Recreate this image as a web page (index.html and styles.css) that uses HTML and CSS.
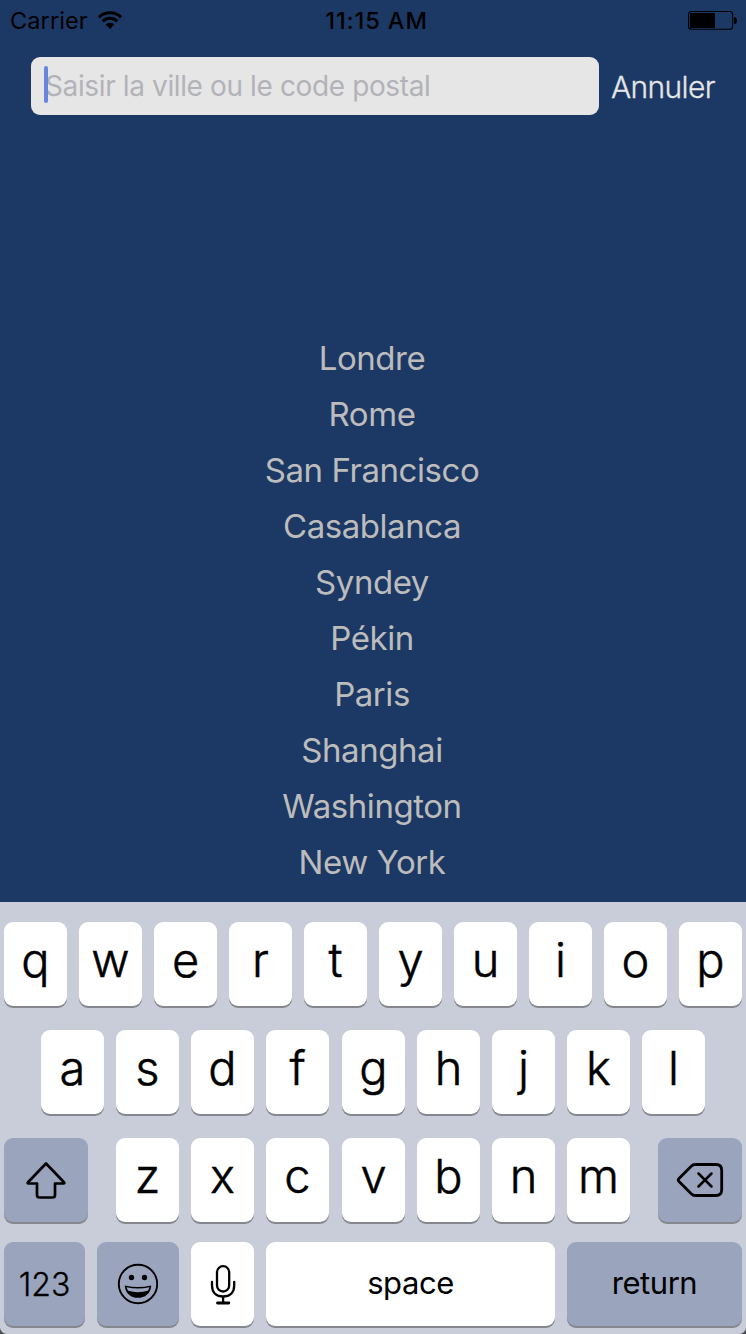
FILE: index.html
```html
<!DOCTYPE html>
<html lang="fr">
<head>
<meta charset="utf-8">
<title>Recherche de ville</title>
<link rel="stylesheet" href="styles.css">
</head>
<body>
<div class="screen">
  <header class="status">
    <div class="status-left">
      <span class="carrier">Carrier</span>
      <svg class="wifi" width="26" height="20" viewBox="0 0 26 20"><g fill="none" stroke="#000" stroke-width="3"><path d="M1.900 7.400a15.700 15.700 0 0 1 22.200 0"/><path d="M5.600 11.400a10.500 10.500 0 0 1 14.800 0"/></g><path d="M8.600 14.600a6.200 6.200 0 0 1 8.800 0L13 19z"/></svg>
    </div>
    <span class="time">11:15 AM</span>
    <svg class="battery" width="50" height="20" viewBox="0 0 50 20"><rect x="1.600" y="1.500" width="44" height="17.800" rx="2.800" fill="none" stroke="#000" stroke-width="1.100"/><rect x="3" y="3" width="25" height="15" rx="1"/><path d="M47 7q3 0 3 3.500T47 14z"/></svg>
  </header>
  <div class="search">
    <div class="field"><span class="placeholder">Saisir la ville ou le code postal</span><span class="caret"></span></div>
    <span class="cancel">Annuler</span>
  </div>
  <ul class="cities">
    <li>Londre</li>
    <li>Rome</li>
    <li>San Francisco</li>
    <li>Casablanca</li>
    <li>Syndey</li>
    <li>Pékin</li>
    <li>Paris</li>
    <li>Shanghai</li>
    <li>Washington</li>
    <li>New York</li>
  </ul>
  <div class="keyboard">
    <div class="row">
      <span class="key">q</span><span class="key">w</span><span class="key">e</span><span class="key">r</span><span class="key">t</span><span class="key">y</span><span class="key">u</span><span class="key">i</span><span class="key">o</span><span class="key">p</span>
    </div>
    <div class="row row-home">
      <span class="key">a</span><span class="key">s</span><span class="key">d</span><span class="key wide-gap">f</span><span class="key">g</span><span class="key">h</span><span class="key">j</span><span class="key">k</span><span class="key">l</span>
    </div>
    <div class="row row-low">
      <span class="key dark shift"><svg width="84" height="84" viewBox="0 0 84 84"><path d="M42 25.500L24 44.300q-1 1.200.6 1.200H33V57q0 2.500 2.500 2.500h13Q51 59.500 51 57V45.500h8.400q1.600 0 .6-1.200z" fill="none" stroke="#000" stroke-width="2.700" stroke-linejoin="round"/></svg></span>
      <span class="key">z</span><span class="key">x</span><span class="key wide-gap">c</span><span class="key">v</span><span class="key">b</span><span class="key">n</span><span class="key">m</span>
      <span class="key dark delete"><svg width="84" height="84" viewBox="0 0 84 84"><g fill="none" stroke="#000" stroke-linecap="round" stroke-linejoin="round"><path d="M37 26.500h21q5.700 0 5.700 5.700v19.600q0 5.700-5.700 5.700H37q-2 0-3.500-1.500L21 43.500q-1.500-1.500 0-3L33.500 28q1.500-1.500 3.500-1.500z" stroke-width="2.800"/><path d="M40.500 35.500l13 13m0-13l-13 13" stroke-width="2.500"/></g></svg></span>
    </div>
    <div class="row row-bottom">
      <span class="key dark digits">123</span>
      <span class="key dark emoji"><svg width="82" height="84" viewBox="0 0 82 84"><circle cx="41" cy="42" r="19.200" fill="none" stroke="#000" stroke-width="1.900"/><circle cx="34.500" cy="35.500" r="2.700"/><circle cx="47.500" cy="35.500" r="2.700"/><path d="M28.200 43.600q12.800 3 25.600 0q.4 0 .4.600c-.8 7.400-6.200 11.600-13.200 11.600s-12.400-4.200-13.200-11.600q0-.6.400-.6z"/><path d="M29.600 45.300q11.400 2.400 22.800 0c-.3 1.400-.8 2.400-1.500 3.400q-9.900 2.900-19.800 0c-.7-1-1.200-2-1.500-3.400z" class="teeth"/></svg></span>
      <span class="key mic"><svg width="63" height="84" viewBox="0 0 63 84"><g fill="none" stroke="#000" stroke-width="2.300" stroke-linecap="round"><rect x="26" y="24.200" width="12.200" height="25.300" rx="6.100"/><path d="M21 40v3.500c0 7 4.500 11 11.100 11s11.100-4 11.100-11V40M32.100 54.500V61"/><path d="M26.500 61h11.300" stroke-width="2.800"/></g></svg></span>
      <span class="key label space">space</span>
      <span class="key dark label return">return</span>
    </div>
    <svg class="corner" width="6" height="6" viewBox="0 0 6 6"><path d="M0 0Q1 5 6 6H0z"/></svg>
    <svg class="corner corner-right" width="6" height="6" viewBox="0 0 6 6"><path d="M6 0Q5 5 0 6H6z"/></svg>
  </div>
</div>
</body>
</html>
```
FILE: styles.css
```css
* { box-sizing: border-box; }
body { margin: 0; font-family: Inter, "Liberation Sans", sans-serif; }
.screen {
  width: 746px;
  height: 1334px;
  display: flex;
  flex-direction: column;
  background: #1c3864;
  overflow: hidden;
}
.status {
  height: 42px;
  padding: 0 9px 0 10px;
  display: grid;
  grid-template-columns: 1fr auto 1fr;
  align-items: center;
  color: #000;
  font-size: 23.5px;
  line-height: 42px;
}
.status-left { display: flex; align-items: center; gap: 9px; }
.carrier { letter-spacing: 0.1px; }
.wifi { margin-bottom: 3px; }
.time { font-weight: 500; letter-spacing: 0.9px; padding-left: 6px; }
.battery { justify-self: end; margin-bottom: 3px; }
.search {
  height: 58px;
  margin: 15px 31px 0;
  display: flex;
  gap: 12px;
}
.field {
  position: relative;
  width: 568px;
  flex: none;
  padding-left: 14px;
  border-radius: 9px;
  background: #e6e6e6;
  color: #b2b3b8;
  font-size: 28px;
  line-height: 58px;
  letter-spacing: -0.38px;
  white-space: nowrap;
}
.caret {
  position: absolute;
  left: 13px;
  top: 9px;
  width: 4px;
  height: 37px;
  border-radius: 2px;
  background: #6984dc;
}
.cancel {
  color: #e6e6e6;
  font-size: 30px;
  font-weight: 300;
  -webkit-text-stroke: 0.3px #e6e6e6;
  line-height: 60px;
  letter-spacing: -0.65px;
  white-space: nowrap;
}
.cities {
  list-style: none;
  margin: 215px 0 0;
  padding: 0 2px 0 0;
  flex: 1;
  color: #bcbcbc;
  font-size: 33px;
  letter-spacing: -0.45px;
  text-align: center;
}
.cities li { height: 56px; line-height: 56px; }
.keyboard {
  position: relative;
  height: 432px;
  flex: none;
  padding: 20px 4px 0;
  background: #c8cdd9;
  color: #000;
}
.row { display: flex; gap: 12px; margin-bottom: 24px; }
.row-home { padding-left: 37px; }
.row-low { margin-bottom: 20px; }
.key {
  width: 63px;
  height: 84px;
  flex: none;
  border-radius: 9px;
  background: #fff;
  box-shadow: 0 2px 0 #85878f;
  font-size: 47px;
  font-weight: 300;
  -webkit-text-stroke: 0.5px #000;
  line-height: 75px;
  text-align: center;
}
.key svg { display: block; }
.wide-gap { margin-right: 1px; }
.dark { background: #9aa5bd; }
.shift { width: 84px; margin-right: 16px; }
.delete { width: 84px; margin-left: 16px; }
.digits { width: 81px; font-size: 32px; line-height: 86px; -webkit-text-stroke-width: 0.3px; }
.emoji { width: 82px; }
.teeth { fill: #9aa5bd; }
.label { font-size: 31px; font-weight: 400; line-height: 82px; letter-spacing: -0.45px; -webkit-text-stroke-width: 0; }
.space { width: 289px; }
.return { width: 175px; }
.corner { position: absolute; left: 0; bottom: 0; fill: #4a4c50; }
.corner-right { left: auto; right: 0; }
```
